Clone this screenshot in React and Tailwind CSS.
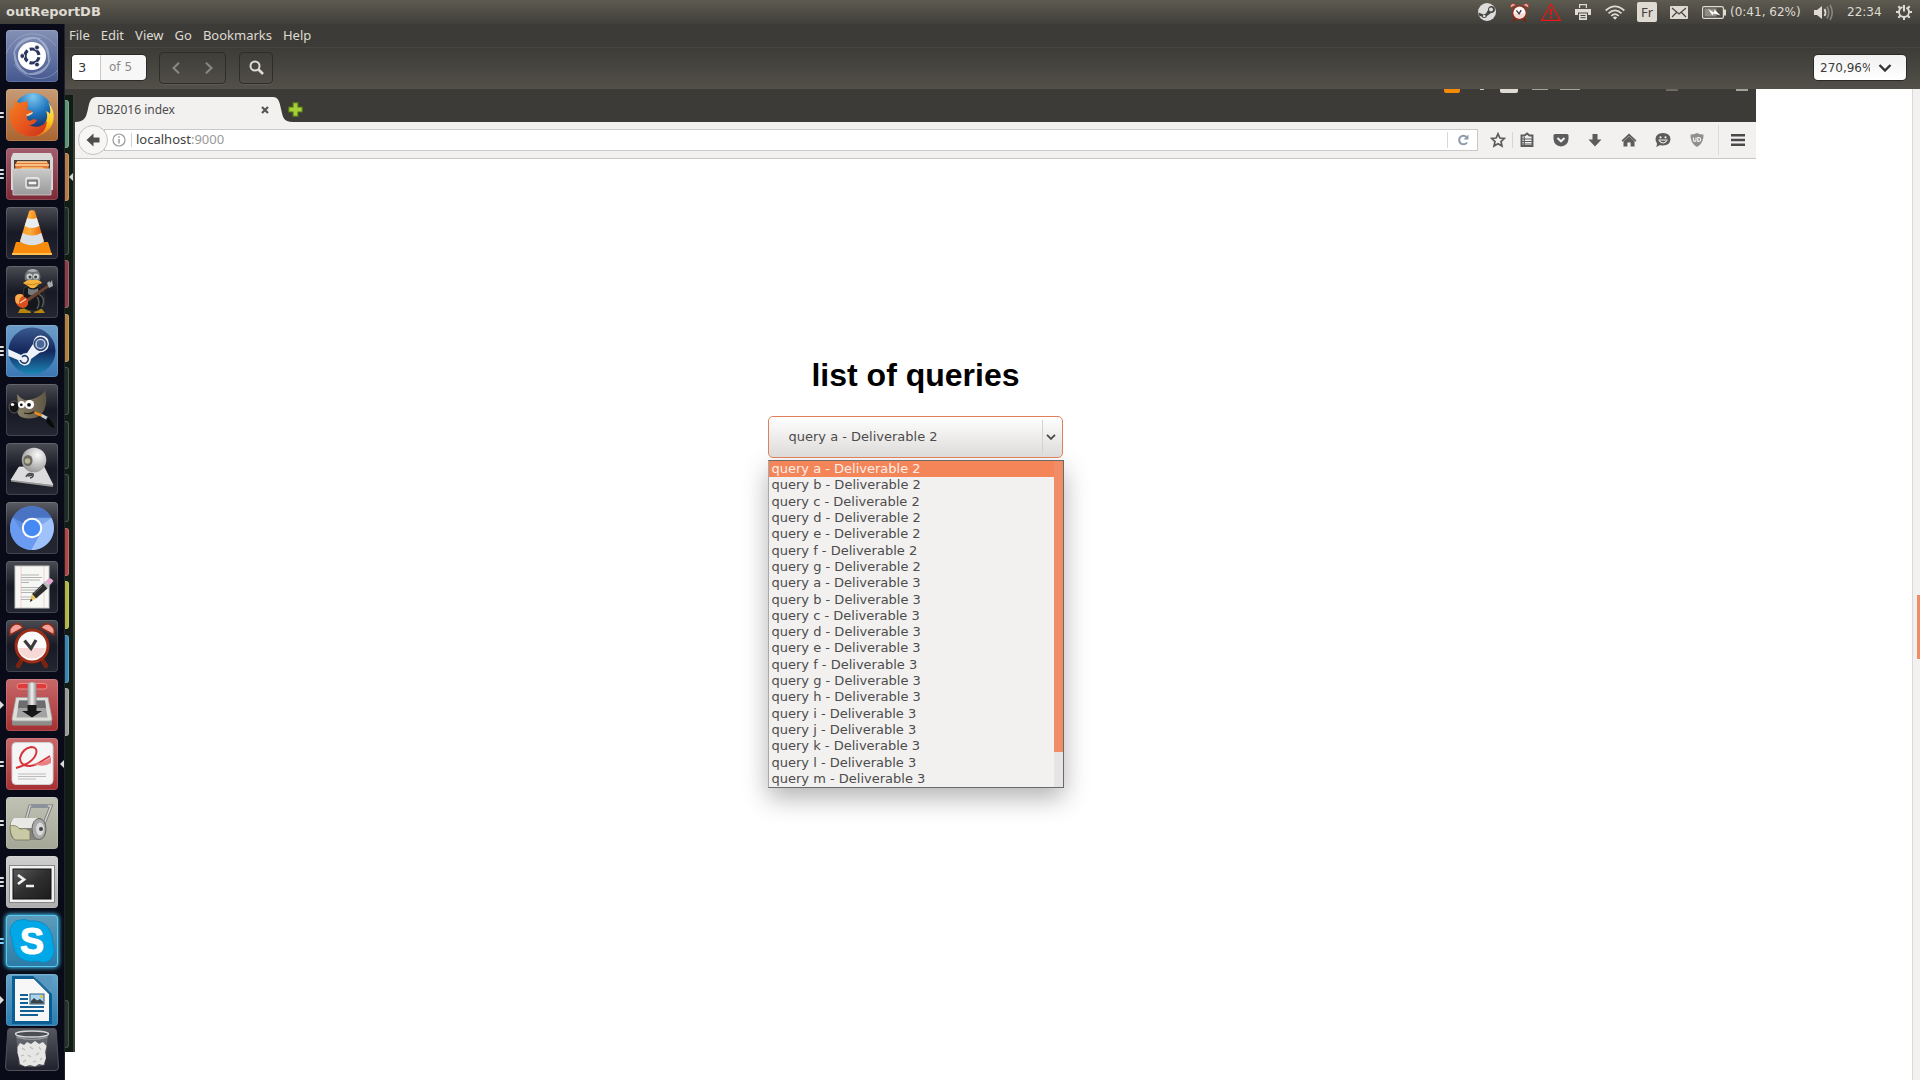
import React from "react";

const UI = "font-['Noto_Sans',sans-serif]";
const WIDE = "font-['DejaVu_Sans',sans-serif]";

/* ---------- launcher artwork (52 x 52 tiles) ---------- */

const Svg = ({ children }) => (
  <svg viewBox="0 0 52 52" className="block size-full" aria-hidden="true">{children}</svg>
);

const Dash = () => (
  <Svg>
    <path d="M26 7 C40 8 47 22 42 34 C43 20 36 10 26 7Z M45 26 C44 41 32 49 17 43 C32 45 41 38 45 26Z M26 45 C12 44 5 32 9 18 C9 32 15 41 26 45Z M7 26 C8 11 21 3 36 9 C21 7 11 14 7 26Z" fill="#c5cde8" opacity=".55" />
    <path d="M0 24 C8 2 34 -4 50 16 M52 40 C40 54 18 50 8 34" fill="none" stroke="#b9c3e2" strokeWidth="1" opacity=".4" />
    <circle cx="26" cy="26" r="14" fill="#fff" />
    <circle cx="26" cy="26" r="7" fill="none" stroke="#2a3660" strokeWidth="3.2" strokeDasharray="12.2 2.46" strokeDashoffset="-1.2" />
    <circle cx="16.3" cy="26" r="2.4" fill="#2a3660" stroke="#fff" strokeWidth=".8" />
    <circle cx="31" cy="17.5" r="2.4" fill="#2a3660" stroke="#fff" strokeWidth=".8" />
    <circle cx="31" cy="34.6" r="2.4" fill="#2a3660" stroke="#fff" strokeWidth=".8" />
  </Svg>
);

const Firefox = () => (
  <Svg>
    <defs>
      <radialGradient id="ffGlobe" cx=".5" cy=".1" r=".9"><stop offset="0" stopColor="#7cc8f0" /><stop offset=".5" stopColor="#1e74bd" /><stop offset="1" stopColor="#10265e" /></radialGradient>
      <linearGradient id="ffFox" x1="0" y1="0" x2="1" y2="1"><stop offset="0" stopColor="#f58220" /><stop offset=".6" stopColor="#e5501d" /><stop offset="1" stopColor="#c4331a" /></linearGradient>
      <linearGradient id="ffTail" x1="0" y1="0" x2="0" y2="1"><stop offset="0" stopColor="#ffee7a" /><stop offset=".6" stopColor="#ffc61a" /><stop offset="1" stopColor="#ee6b1c" /></linearGradient>
    </defs>
    <circle cx="27" cy="23" r="19" fill="url(#ffGlobe)" />
    <path d="M42 13 C50 22 50 36 40 43 C32 49 22 48 16 45 L36 38 C42 32 42 26 40 22 Q43 23 44 25 Q45 18 42 13Z" fill="url(#ffTail)" />
    <path d="M9 11 Q11 14 14 14 Q18 12 21 13 L21 9 Q22 12 22 16 L21 21 Q25 21 27 23 Q26 26 21 27 Q20 31 24 32 Q27 29 31 31 Q29 36 23 36 Q33 41 41 32 Q40 46 26 47.500 C12 47 3 38 4 26 Q4 20 8 17Z" fill="url(#ffFox)" />
    <path d="M20 26 Q23 24 27 23 Q26 26 21 27Z" fill="#f8d9b0" />
  </Svg>
);

const Files = () => (
  <Svg>
    <defs><linearGradient id="fileFront" x1="0" y1="0" x2="0" y2="1"><stop offset="0" stopColor="#c9c9c9" /><stop offset="1" stopColor="#999" /></linearGradient></defs>
    <path d="M7 5 H45 L47 10 V42 H5 V10Z" fill="#d9d9d9" />
    <path d="M8 12 H44 V42 H8Z" fill="#4a3b35" />
    <path d="M10 14 H42 L43 22 H9Z" fill="#e07a35" />
    <path d="M9 17 H43 M11 14 H41" stroke="#ffd9a0" strokeWidth="1.300" />
    <path d="M13 22 L16 19 H36 L41 22Z" fill="#f4b26a" />
    <path d="M6 21 H46 L45 47 H7Z" fill="url(#fileFront)" stroke="#ddd" strokeWidth=".7" />
    <rect x="20" y="30" width="13" height="10" rx="2" fill="#aaa" stroke="#f1f1f1" strokeWidth="1.300" />
    <rect x="22" y="33" width="9" height="4" fill="#f4f4f4" stroke="#555" />
  </Svg>
);

const Vlc = () => (
  <Svg>
    <defs><linearGradient id="vlcO" x1="0" x2="1"><stop offset="0" stopColor="#ff9c1a" /><stop offset=".4" stopColor="#ffad3d" /><stop offset="1" stopColor="#e06000" /></linearGradient></defs>
    <path d="M10 35 H42 L46 48 H6Z" fill="#f98c0c" />
    <path d="M6 46 H46 V48 H6Z" fill="#ffc04d" />
    <path d="M26 3 Q28.500 3 29 4.500 L38 34 Q26 41 14 34 L23 4.500 Q23.500 3 26 3Z" fill="url(#vlcO)" />
    <path d="M21.200 11 Q26 13 30.800 11 L33.400 19 Q26 23 18.600 19Z" fill="#e9eef2" />
    <path d="M16.700 26 Q26 31 35.300 26 L38 34.500 Q26 42 14 34.500Z" fill="#d9e0e6" />
  </Svg>
);

const Duck = () => (
  <Svg>
    <path d="M14 43 L23 42 L25 47 H12Z M29 43 L36 43 L39 47 H28Z" fill="#b8860b" />
    <path d="M18 22 Q27 17 35 22 Q40 30 38 39 Q33 46 27 45 Q18 45 16 38Z" fill="#15171a" stroke="#3a3d40" strokeWidth=".8" />
    <path d="M22 22 Q27 25 32 22 L33 28 Q27 31 22 28Z" fill="#75797b" />
    <path d="M33 28 Q40 32 36 41 M31 31 Q35 36 31 43" fill="none" stroke="#54585b" strokeWidth="1.500" />
    <path d="M19 14 Q17 4 27 3 Q36 4 34 14 Q27 18 19 14Z" fill="#6f7476" />
    <path d="M21 5 Q27 1 32 5 Q27 7 21 5Z" fill="#a9adaf" />
    <ellipse cx="23.500" cy="10.500" rx="3" ry="3" fill="#c9cdce" />
    <ellipse cx="30" cy="10.500" rx="3" ry="3" fill="#c9cdce" />
    <circle cx="24" cy="11" r="1.500" fill="#3d4143" /><circle cx="29.600" cy="11" r="1.500" fill="#3d4143" />
    <path d="M17 17 Q22 13 27 14 Q33 13 36 17 Q32 18 30 21 Q26 24 22 20Z" fill="#f5b53c" />
    <path d="M19 18 Q27 20 34 17" fill="none" stroke="#c77f17" strokeWidth=".9" />
    <path d="M20 33 L43 18 L44.500 20 L22 36Z" fill="#6b4531" />
    <path d="M41 17 L43.500 15 L44 17 L46 14 L47 20 L43 22Z" fill="#a9adb0" />
    <path d="M9 34 Q8 28 14 28 Q18 28 18 31 Q21 31 22 35 Q23 41 17 42 Q10 41 9 34Z" fill="#d9501d" />
    <path d="M9.500 35 Q8 28 14 28 Q17 28 17 30 Q13 31 13 38 Q10 38 9.500 35Z" fill="#f9ac4f" />
    <path d="M14 37 L20 33" stroke="#f2d6ba" strokeWidth="1.200" />
  </Svg>
);

const Steam = () => (
  <Svg>
    <defs><linearGradient id="steamG" x1="0" y1="0" x2="0" y2="1"><stop offset="0" stopColor="#3a5a8f" /><stop offset=".5" stopColor="#14275c" /><stop offset="1" stopColor="#1b87b8" /></linearGradient></defs>
    <circle cx="26" cy="26" r="23.500" fill="url(#steamG)" />
    <path d="M2 24 L15 30 Q17 28 21 28 L27 19 Q28 10 35 10.500 Q43 11 43 19 Q42 27 34 27.500 L25 34 Q24 41 18 40.500 Q13 39 12 35 L2.500 31Z" fill="#eef2f8" />
    <circle cx="34.500" cy="19" r="6.500" fill="#4a6696" stroke="#17305f" strokeWidth="1" />
    <circle cx="34.500" cy="19" r="4.500" fill="none" stroke="#dfe6f0" strokeWidth="1.200" />
    <path d="M14 35 Q16 39 20 38 Q24 35 21 31.500 Q18 29.500 16 32" fill="none" stroke="#1c3768" strokeWidth="1.500" />
  </Svg>
);

const Gimp = () => (
  <Svg>
    <defs><linearGradient id="gimpG" x1="0" x2="1"><stop offset="0" stopColor="#8b8168" /><stop offset="1" stopColor="#5d5644" /></linearGradient></defs>
    <path d="M11 10 Q15 15 19 16 Q28 16 35 11 Q38 9 39 6 Q43 22 35 31 Q26 37 15 33 Q9 30 12 20Z" fill="url(#gimpG)" />
    <ellipse cx="8" cy="23" rx="5" ry="6" fill="#141414" stroke="#5a5a5a" />
    <ellipse cx="6.500" cy="20.500" rx="1.800" ry="1.600" fill="#f2f2f2" />
    <circle cx="15.500" cy="20.500" r="3.500" fill="#fff" /><circle cx="15.300" cy="20.800" r="1.400" fill="#111" />
    <circle cx="23.500" cy="20.500" r="4.600" fill="#fff" /><circle cx="23" cy="20.800" r="1.900" fill="#111" />
    <path d="M18 29 Q25 31 29 27" fill="none" stroke="#262217" strokeWidth="1.300" />
    <path d="M28 27 L38 31 L37 33.500 L29 30Z" fill="#ef8b1c" />
    <path d="M36 30 L42 33 L41 36 L35.500 33Z" fill="#c8d0d6" />
    <path d="M41 33 Q46 36 49 44 Q43 43 40 37Z" fill="#0a0a0a" />
  </Svg>
);

const Webcam = () => (
  <Svg>
    <defs><radialGradient id="camG" cx=".65" cy=".3" r=".8"><stop offset="0" stopColor="#fafafa" /><stop offset="1" stopColor="#8d8d8d" /></radialGradient></defs>
    <path d="M13 24 L5 37 L47 42 L38 24Z" fill="#dcdcdf" stroke="#f5f5f5" strokeWidth=".7" />
    <path d="M5 37 L47 42 V44 L5 38.500Z" fill="#999" />
    <circle cx="28" cy="17" r="12.300" fill="url(#camG)" />
    <ellipse cx="22" cy="17.500" rx="4.500" ry="5.500" fill="#6c6960" />
    <circle cx="21.500" cy="18" r="2.800" fill="#b9b39a" />
    <path d="M20 34 Q22 29 27 31 Q28 34 24 35 M22 33 L26 32" fill="none" stroke="#444" strokeWidth="1.500" />
  </Svg>
);

const Chromium = () => (
  <Svg>
    <circle cx="26" cy="26" r="22" fill="#5c8ce0" />
    <path d="M26 26 L6.800 15.500 A22 22 0 0 1 45.200 15.500 L30 15.500Z" fill="#4a73c4" />
    <path d="M26 16 H45.500 A22 22 0 0 1 25 48 L34.500 31Z" fill="#a0c2fa" />
    <path d="M6.800 15.500 A22 22 0 0 0 25 48 L34 32 L18 32Z" fill="#6a9bf0" />
    <path d="M26 16 H45.500 L34 24Z" fill="#7ea7ea" />
    <circle cx="26" cy="26" r="10.200" fill="#fff" />
    <circle cx="26" cy="26" r="8.200" fill="#4489f4" />
  </Svg>
);

const Editor = () => (
  <Svg>
    <rect x="9" y="5" width="34" height="42" fill="#f7f7f5" stroke="#c7c7c3" />
    <path d="M15 5 V47 M38 5 V47" stroke="#f3b8b8" strokeWidth=".6" />
    <path d="M15 14 H33 M15 16.500 H36 M15 19 H34 M15 21.500 H23 M15 26.500 H36 M15 29 H33 M15 31.500 H34 M15 36 H32 M15 38.500 H27" stroke="#aaa" strokeWidth=".9" />
    <path d="M42 18 Q45 16 47.500 20 L44 24 L39.500 20.500Z" fill="#e9a6d0" />
    <path d="M39 20 L44 25 L41 27.500 L36.500 23Z" fill="#b9bdc0" />
    <path d="M37 22.500 L41.500 27.500 L30 37.500 L26 33Z" fill="#2c2c2c" />
    <path d="M36 25 L28 32.500" stroke="#777" strokeWidth="1" />
    <path d="M26 33 L30 37.500 L24 40.500Z" fill="#e9c35b" />
    <path d="M25 37.500 L26.500 39.500 L23.800 41Z" fill="#222" />
  </Svg>
);

const ClockArt = () => (
  <>
    <path d="M15 41 L12 46 M37 41 L40 46" stroke="#7a2410" strokeWidth="4.500" strokeLinecap="round" />
    <path d="M4 15 Q2 7 9 4 Q15 3 17 8Z M48 15 Q50 7 43 4 Q37 3 35 8Z" fill="#f2a09a" stroke="#8a2a16" strokeWidth="1.600" />
    <circle cx="26" cy="26" r="17.500" fill="#9b2c15" />
    <circle cx="26" cy="26" r="14.500" fill="#fbfbfb" />
    <path d="M12 28 A14.500 14.500 0 0 0 40 28Z" fill="#f6d9d6" />
    <path d="M18.500 20.500 L25 28.500 L30 20" fill="none" stroke="#3c3c3c" strokeWidth="3.200" />
  </>
);
const Alarm = () => <Svg><ClockArt /></Svg>;

const Transmission = () => (
  <Svg>
    <defs><linearGradient id="trH" x1="0" x2="1"><stop offset="0" stopColor="#8f8f8f" /><stop offset=".5" stopColor="#f1f1f1" /><stop offset="1" stopColor="#8b8b8b" /></linearGradient></defs>
    <path d="M10 19 H42 L46 39 V45 Q46 46.500 44 46.500 H8 Q6 46.500 6 45 V39Z" fill="#8d8d8a" />
    <path d="M10 18.500 H42 L46 40 Q46 42 44 42 H8 Q6 42 6 40Z" fill="#dededb" stroke="#a5a5a2" strokeWidth=".8" />
    <path d="M13 21.500 H39 L41.500 38.500 H10.500Z" fill="#a3a3a3" />
    <path d="M13 21.500 H39 L40 29 H12Z" fill="#6d6d70" />
    <rect x="11" y="4.500" width="30" height="5.500" rx="2.700" fill="#e03b3b" stroke="#f89a9a" strokeWidth=".8" />
    <rect x="21.500" y="3.500" width="9" height="26" rx="2" fill="url(#trH)" />
    <path d="M21.500 26 H30.500 V32 H36 L26 38.500 L16 32 H21.500Z" fill="#161616" />
  </Svg>
);

const Evince = () => (
  <Svg>
    <rect x="6" y="4.500" width="41" height="42" rx="4" fill="#f5f5f5" stroke="#cfcfcf" />
    <path d="M12 36 H40 M12 38.500 H40 M12 41 H30" stroke="#bbb" strokeWidth="1" />
    <path d="M10 30 Q27 25 30 16 Q32 9 25 9 Q16 11 14 20 Q14 28 24 28 Q31 27 36 23 L44 18" fill="none" stroke="#d6343a" strokeWidth="2" />
    <path d="M27 26 Q37 25 45 19 L45 25 Q38 30 27 26Z" fill="#e98083" />
  </Svg>
);

const Roller = () => (
  <Svg>
    <path d="M20 23 L24 9 H45 L36 32" fill="none" stroke="#777" strokeWidth="3.200" />
    <path d="M20 23 L24 9 H45 L36 32" fill="none" stroke="#d4d4d4" strokeWidth="1.500" />
    <rect x="25" y="7" width="17" height="4" rx="2" fill="#8b929c" />
    <path d="M8 21 H34 Q41 24 40 33 Q40 42 33 43 H9 Q3 40 4 31 Q4 23 8 21Z" fill="#84847e" />
    <path d="M8 21 H32 L30 31 H5 Q4 24 8 21Z" fill="#e8e8e4" />
    <path d="M4 29 Q9 27 14 32 Q20 30 24 34 V43 H9 Q4 39 4 29Z" fill="#c9c9a6" stroke="#75755a" strokeWidth=".8" />
    <ellipse cx="33" cy="32" rx="7" ry="10.500" fill="#a9a9a9" stroke="#666" />
    <ellipse cx="34" cy="32" rx="4" ry="6.500" fill="#d9d9d9" />
    <circle cx="35" cy="32" r="2" fill="#444" />
  </Svg>
);

const Terminal = () => (
  <Svg>
    <defs><linearGradient id="termG" x1="0" y1="0" x2="1" y2="1"><stop offset="0" stopColor="#5a5a5a" /><stop offset=".5" stopColor="#2f2f2f" /><stop offset="1" stopColor="#1c1c1c" /></linearGradient></defs>
    <rect x="3.500" y="9.500" width="45" height="37" fill="#f1f1f1" stroke="#888" />
    <rect x="7" y="13" width="38" height="30" fill="url(#termG)" stroke="#111" />
    <path d="M12 19 L18 23.500 L12 28" fill="none" stroke="#f0f0f0" strokeWidth="2.800" />
    <path d="M20 30 H28" stroke="#f0f0f0" strokeWidth="2.400" />
  </Svg>
);

const Skype = () => (
  <Svg>
    <path d="M14 5 Q19 3 23 6 Q46 4 47 29 Q50 36 46 43 Q40 50 32 46 Q8 50 6 24 Q2 17 6 10 Q9 5 14 5Z" fill="#00a8e8" stroke="#0b86be" strokeWidth=".8" />
    <text x="26" y="38.500" textAnchor="middle" fontFamily="Liberation Sans" fontWeight="bold" fontSize="36" fill="#fff" stroke="#fff" strokeWidth="1.200" strokeLinejoin="round">S</text>
  </Svg>
);

const Writer = () => (
  <Svg>
    <path d="M6 2 H46 V50 H6Z" fill="#0c5d92" />
    <path d="M27 2 H46 V20Z" fill="#6ba6cc" opacity=".8" />
    <path d="M9 5 H28 L43 20 V47 H9Z" fill="#f7f7f7" />
    <path d="M28 5 L43 20 V17 L31 5Z" fill="#1d699b" />
    <path d="M14 21 H22 M14 25 H22 M14 29 H22 M14 33 H38 M14 37 H38 M14 41 H32" stroke="#145f94" strokeWidth="2" />
    <rect x="24" y="20" width="14" height="10" fill="#a8d4ee" stroke="#2b5e80" />
    <path d="M25 29.500 V27 L28 24 L31 26.500 L34 25 L37.500 28 V29.500Z" fill="#394247" />
    <circle cx="35.500" cy="22.500" r="1.500" fill="#eec23a" />
  </Svg>
);

const Trash = () => (
  <svg viewBox="0 0 54 43" className="block w-full" aria-hidden="true">
    <defs><linearGradient id="trashG" x1="0" y1="0" x2="0" y2="1"><stop offset="0" stopColor="#55565e" /><stop offset="1" stopColor="#20212c" /></linearGradient></defs>
    <path d="M5 .5 H49 Q51 .5 51.300 3 L53.500 39 Q53.500 42.500 50 42.500 H4 Q.5 42.500 .5 39 L2.700 3 Q3 .5 5 .5Z" fill="url(#trashG)" stroke="#50515b" />
    <path d="M11 7 L14 37 Q27 41 40 37 L43 7Z" fill="#777981" opacity=".6" />
    <path d="M12.500 19 L15 15 L19 17 L22 14 L26 16 L30 13 L34 16 L38 14 L41.500 18 L40 24 L41 30 L38.500 37 L34 36 L30 38.500 L25 37 L20 38.500 L15 36 L14 30 L12.500 25Z" fill="#e6e7e5" />
    <path d="M17 20 L20 22 M25 19 L28 21 M34 19 L36 22 M16 28 L19 27 M23 27 L26 29 M31 27 L34 25 M18 34 L21 32 M28 34 L31 33 M35 32 L37 30" fill="none" stroke="#b9bbb8" strokeWidth="1.200" />
    <ellipse cx="27" cy="6" rx="16.500" ry="3" fill="#4c4e56" stroke="#d5d6d6" strokeWidth="1.300" />
    <path d="M11.500 9 Q27 14 42.500 9" fill="none" stroke="#9a9ca0" strokeWidth="1.200" />
  </svg>
);

const launcher = [
  { name: "Search your computer", art: Dash, bg: "bg-linear-to-b from-[#8490b5] to-[#45588f]" },
  { name: "Firefox", art: Firefox, bg: "bg-linear-to-b from-[#c79b76] to-[#a9642f]", pips: 2 },
  { name: "Files", art: Files, bg: "bg-linear-to-b from-[#a25d6d] to-[#7c2936]", pips: 3 },
  { name: "VLC", art: Vlc, bg: "bg-linear-to-b from-[#4b4c53] via-[#171924] to-[#242631]" },
  { name: "Media tools", art: Duck, bg: "bg-linear-to-b from-[#4b4c53] via-[#171924] to-[#242631]" },
  { name: "Steam", art: Steam, bg: "bg-linear-to-b from-[#6d9cc8] to-[#3a78b4]", pips: 3 },
  { name: "GIMP", art: Gimp, bg: "bg-linear-to-b from-[#4b4c53] via-[#171924] to-[#242631]" },
  { name: "Webcam", art: Webcam, bg: "bg-linear-to-b from-[#4b4c53] via-[#171924] to-[#242631]" },
  { name: "Chromium", art: Chromium, bg: "bg-linear-to-b from-[#5b5c63] via-[#202230] to-[#242631]" },
  { name: "Text Editor", art: Editor, bg: "bg-linear-to-b from-[#4b4c53] via-[#171924] to-[#242631]" },
  { name: "Alarm", art: Alarm, bg: "bg-linear-to-b from-[#4b4c53] via-[#171924] to-[#242631]" },
  { name: "Transmission", art: Transmission, bg: "bg-linear-to-b from-[#c8686a] to-[#a52f33]", arrow: true },
  { name: "Document Viewer", art: Evince, bg: "bg-linear-to-b from-[#c8686a] to-[#a52f33]", pips: 2, active: true },
  { name: "Paint Roller", art: Roller, bg: "bg-linear-to-b from-[#c0c2b5] to-[#a5a796]", pips: 2 },
  { name: "Terminal", art: Terminal, bg: "bg-linear-to-b from-[#cfcfcf] to-[#adadad]", pips: 3 },
  { name: "Skype", art: Skype, bg: "bg-linear-to-b from-[#5f9cbb] to-[#2a7ba6]", pips: 2, urgent: true },
  { name: "Writer", art: Writer, bg: "bg-linear-to-b from-[#63a3c9] to-[#2a7db0]", arrow: true },
];

function LauncherItem({ item }) {
  const Art = item.art;
  return (
    <li className="relative flex h-[52px] w-full shrink-0 items-center pl-1.5">
      {item.pips && (
        <span className="absolute left-0 flex flex-col gap-0.5">
          {Array.from({ length: item.pips }, (_, i) => (
            <span key={i} className={item.urgent ? "h-0.5 w-1 rounded-r-full bg-[#7fd0f2]" : "h-0.5 w-1 rounded-r-full bg-[#dcdcdc]"} />
          ))}
        </span>
      )}
      {item.arrow && <span className="absolute left-0 border-y-4 border-l-4 border-y-transparent border-l-[#dcdcdc]" />}
      <button
        type="button"
        aria-label={item.name}
        className={`size-[52px] overflow-hidden rounded-[4px] ${item.bg} ${item.urgent ? "shadow-[0_0_4px_1px_#45c4f5] ring-1 ring-[#57c8f2] ring-inset" : "shadow-[inset_0_0_0_1px_rgba(255,255,255,0.14)]"}`}
      >
        <Art />
      </button>
      {item.active && <span className="absolute right-0 border-y-4 border-r-4 border-y-transparent border-r-[#dcdcdc]" />}
    </li>
  );
}

function Launcher() {
  return (
    <nav aria-label="Launcher" className="flex w-[65px] shrink-0 flex-col border-r border-[#20222c] bg-[#090c18] pt-1.5">
      <ul className="flex flex-col gap-[7px]">
        {launcher.map((item) => <LauncherItem key={item.name} item={item} />)}
      </ul>
      <button type="button" aria-label="Trash" className="mt-0.5 ml-[5px] w-[54px]"><Trash /></button>
    </nav>
  );
}

/* ---------- top panel ---------- */

const Cell = ({ label, children }) => (
  <button type="button" aria-label={label} className="flex w-8 items-center justify-center">{children}</button>
);

function TopPanel() {
  return (
    <header className={`flex h-6 shrink-0 items-center justify-between bg-linear-to-b from-[#5e5b50] to-[#403f3a] pr-2 pl-1.5 text-[#dfdbd2] ${WIDE}`}>
      <h1 className="text-[13px] leading-6 font-bold">outReportDB</h1>
      <div className="flex h-6 items-center">
        <Cell label="Steam">
          <svg viewBox="0 0 18 18" className="size-[18px]"><circle cx="9" cy="9" r="9" fill="#dcdcdc" /><path d="M.5 9.500 L5.500 11.500 L8 10.500 L10 7 A3.500 3.500 0 1 1 13 10 L9 13 A3 3 0 0 1 3.500 13.500 L1 12.500Z" fill="#47453f" /><circle cx="13" cy="6.500" r="2" fill="#dcdcdc" /><circle cx="6.200" cy="13" r="1.300" fill="#dcdcdc" /></svg>
        </Cell>
        <Cell label="Alarm"><svg viewBox="1 2 50 47" className="size-[21px]"><ClockArt /></svg></Cell>
        <Cell label="Warning">
          <svg viewBox="0 0 20 18" className="h-[18px] w-5" fill="none" stroke="#f01414"><path d="M10 1 L19.300 17.300 H.7Z" strokeWidth="1.200" /><path d="M10 6 V12 M10 13.500 V15.500" strokeWidth="1.800" /></svg>
        </Cell>
        <Cell label="Printer">
          <svg viewBox="0 0 16 16" className="size-4" fill="#dfdbd2"><path d="M4 0 H12 V4 H10.800 V1.300 H5.200 V4 H4Z M0 5 H16 V11 H13 V8.500 H3 V11 H0Z M4 9.500 H12 V16 H4Z" /><path d="M5.500 11.500 H10.500 M5.500 13.700 H10.500" stroke="#47453f" /></svg>
        </Cell>
        <Cell label="Network">
          <svg viewBox="0 0 20 15" className="h-[15px] w-5" fill="none" stroke="#dfdbd2" strokeWidth="1.700"><path d="M.7 5.500 Q10 -2.800 19.300 5.500 M3.500 8.300 Q10 2.300 16.500 8.300 M6.200 11 Q10 7.300 13.800 11" /><path d="M7.800 12.500 Q10 10.500 12.200 12.500 L10 14.800Z" fill="#dfdbd2" stroke="none" /></svg>
        </Cell>
        <Cell label="Keyboard layout">
          <span className={`h-5 w-5 rounded-[2px] bg-[#dfdbd2] text-center text-[13px] leading-5 text-[#403f3a] ${UI}`}>Fr</span>
        </Cell>
        <Cell label="Messages">
          <svg viewBox="0 0 18 13" className="h-[13px] w-[18px]"><rect width="18" height="13" rx="1" fill="#dfdbd2" /><path d="M2 2 L9 8 L16 2 M2 11 L6.500 6.500 M16 11 L11.500 6.500" fill="none" stroke="#47453f" strokeWidth="1.200" /></svg>
        </Cell>
        <button type="button" className="ml-[7px] flex w-28 items-center gap-1 text-[12px]">
          <svg viewBox="0 0 24 13" className="h-[13px] w-6 shrink-0"><rect x=".6" y=".6" width="20.800" height="11.800" rx="1.500" fill="none" stroke="#dfdbd2" strokeWidth="1.200" /><rect x="22" y="3.500" width="2" height="6" fill="#dfdbd2" /><rect x="2.500" y="2.500" width="12" height="8" fill="#8f8c83" /><path d="M6 3 L12 6.500 L12.500 3.500 L18.500 9.500 L11.500 7.500 L10.500 9.500Z" fill="#fff" /></svg>
          (0:41, 62%)
        </button>
        <button type="button" aria-label="Volume" className="w-[33px]">
          <svg viewBox="0 0 20 17" className="h-[17px] w-5" fill="none"><path d="M0 6 H3 L8 2 V15 L3 11 H0Z" fill="#dfdbd2" /><path d="M10.500 5 Q12.500 8.500 10.500 12" stroke="#dfdbd2" strokeWidth="1.800" /><path d="M13 2.500 Q16.500 8.500 13 14.500 M16 1 Q20.500 8.500 16 16" stroke="#8a877d" strokeWidth="1.600" /></svg>
        </button>
        <button type="button" className="w-[49px] text-left text-[12px]">22:34</button>
        <button type="button" aria-label="Session">
          <svg viewBox="0 0 16 16" className="size-4" fill="none" stroke="#dfdbd2"><circle cx="8" cy="8" r="5" strokeWidth="1.800" strokeDasharray="27.400 4" strokeDashoffset="-25.500" /><path d="M8 1 V7.500" strokeWidth="2" /><path d="M13 8 H16 M0 8 H3 M8 13 V16 M11.500 11.500 L13.700 13.700 M4.500 11.500 L2.300 13.700 M4.500 4.500 L2.300 2.300 M11.500 4.500 L13.700 2.300" strokeWidth="2" /></svg>
        </button>
      </div>
    </header>
  );
}

/* ---------- document viewer chrome ---------- */

function ViewerBars() {
  return (
    <>
      <nav aria-label="Menu" className={`flex h-[23px] shrink-0 items-center gap-[11px] bg-[#3c3b37] pl-1 text-[13px] text-[#dfdbd2] ${UI}`}>
        {["File", "Edit", "View", "Go", "Bookmarks", "Help"].map((m) => <button key={m} type="button">{m}</button>)}
      </nav>
      <div className={`flex h-[42px] shrink-0 items-center border-t border-[#464540] bg-linear-to-b from-[#3d3c38] to-[#525048] pr-3.5 pb-0.5 pl-[7px] text-[13px] ${WIDE}`}>
        <div className="flex h-[25px] w-[74px] overflow-hidden rounded-[4px] bg-[#f7f7f7] ring-1 ring-[#2b2a27]">
          <input aria-label="Page" defaultValue="3" className="w-[29px] border-r border-[#cfc9c4] bg-white pl-1.5 text-[#3c3c3c] outline-none" />
          <span className="pl-2 text-[12px] leading-[25px] text-[#8a8a8a]">of 5</span>
        </div>
        <div className="ml-[13px] flex h-8 w-[67px] rounded-[4px] border border-[#2e2d2a] text-[#8c8982] shadow-[0_1px_0_#5b5950]">
          <button type="button" aria-label="Previous page" className="flex flex-1 items-center justify-center">
            <svg viewBox="0 0 8 12" className="h-3 w-2" fill="none" stroke="currentColor" strokeWidth="2"><path d="M7 .7 L1.500 6 L7 11.300" /></svg>
          </button>
          <button type="button" aria-label="Next page" className="flex flex-1 items-center justify-center">
            <svg viewBox="0 0 8 12" className="h-3 w-2" fill="none" stroke="currentColor" strokeWidth="2"><path d="M1 .7 L6.500 6 L1 11.300" /></svg>
          </button>
        </div>
        <button type="button" aria-label="Find" className="ml-[13px] flex h-8 w-[34px] items-center justify-center rounded-[4px] border border-[#2e2d2a] shadow-[0_1px_0_#5b5950]">
          <svg viewBox="0 0 15 15" className="size-[15px]" fill="none" stroke="#dfdbd2"><circle cx="6" cy="6" r="4.500" strokeWidth="2" /><path d="M9.500 9.500 L14 14" strokeWidth="2.600" /></svg>
        </button>
        <div className="ml-auto flex h-[25px] w-[92px] items-center rounded-[4px] bg-linear-to-b from-[#f1f1f1] to-white pl-1.5 text-[#3c3c3c] ring-1 ring-[#2b2a27]">
          <input aria-label="Zoom" defaultValue="270,96%" className="w-[50px] bg-transparent text-[12px] outline-none" />
          <button type="button" aria-label="Zoom levels" className="ml-2">
            <svg viewBox="0 0 14 8" className="h-2 w-3.5" fill="none" stroke="#333" strokeWidth="2.400"><path d="M1.500 1 L7 6.500 L12.500 1" /></svg>
          </button>
        </div>
      </div>
    </>
  );
}

/* ---------- the document page: a browser window ---------- */

const stripTiles = [
  "bg-[#5b9375]", "bg-[#b57a48]", "bg-[#1e2d26]", "bg-[#8c3b49]", "bg-[#b48040]", "bg-[#1e2d26]",
  "bg-[#1e2d26]", "bg-[#1e2d26]", "bg-[#b14544]", "bg-[#b3b444]", "bg-[#3b85b4]", "bg-[#999c99]",
];

function Strip() {
  return (
    <div className="flex w-[10px] shrink-0 flex-col bg-[#3c3b37] pt-1.5">
      <div className="relative flex flex-1 flex-col border-r-2 border-[#3a413b] bg-[#111d14] pt-[5px] pb-1">
        <div className="flex h-[636px] flex-col justify-between">
          {stripTiles.map((c, i) => <span key={i} className={`h-12 w-1 rounded-r-[3px] border-y border-r border-white/20 ${c}`} />)}
        </div>
        <span className="mt-auto h-12 w-1 rounded-r-[3px] border border-l-0 border-white/15 bg-[#26322c]" />
        <span className="absolute top-[78px] right-0 border-y-4 border-r-4 border-y-transparent border-r-[#d8d8d8]" />
      </div>
    </div>
  );
}

const BarBtn = ({ label, children, className = "w-[34px]" }) => (
  <button type="button" aria-label={label} className={`flex shrink-0 items-center justify-center text-[#5c5c5c] ${className}`}>
    <svg viewBox="0 0 16 16" className="size-4" fill="currentColor">{children}</svg>
  </button>
);

function BrowserTabs() {
  return (
    <div className="relative flex h-[33px] items-end bg-[#3c3b37]">
      <svg viewBox="0 0 22 25" className="h-[25px] w-[22px] shrink-0"><path d="M0 25 C10 25 11 20 13 12 C14.500 4 16 0 22 0 V25Z" fill="#f2f1f0" /></svg>
      <div className={`flex h-[25px] w-[176px] items-center justify-between bg-[#f2f1f0] text-[12px] text-[#4c4c4c] ${UI}`}>
        <span>DB2016 index</span>
        <button type="button" aria-label="Close tab" className="mr-1">
          <svg viewBox="0 0 8 8" className="size-2" stroke="#555" strokeWidth="2.200"><path d="M1 1 L7 7 M7 1 L1 7" /></svg>
        </button>
      </div>
      <svg viewBox="0 0 20 25" className="h-[25px] w-5 shrink-0"><path d="M20 25 C10 25 10 20 8 12 C6.500 4 5 0 0 0 V25Z" fill="#f2f1f0" /></svg>
      <button type="button" aria-label="New tab" className="mb-[5px] -ml-[5px] size-[15px]">
        <svg viewBox="0 0 15 15" className="size-[15px]"><path d="M5 .7 H10 V5 H14.300 V10 H10 V14.300 H5 V10 H.7 V5 H5Z" fill="#a8cf3a" stroke="#4f7315" strokeWidth="1.200" /></svg>
      </button>
      <div className="absolute top-0 right-2 flex items-start">
        <span className="h-1 w-4 rounded-b-[2px] bg-[#f58a07]" />
        <span className="ml-5 h-px w-1 bg-[#cfcbc2]" />
        <span className="ml-4 h-1 w-[18px] rounded-b-[2px] bg-[#dfdbd2]" />
        <span className="ml-3.5 h-px w-4 bg-[#a5a299]" />
        <span className="ml-3 h-px w-5 bg-[#a5a299]" />
        <span className="ml-[86px] h-0.5 w-3 bg-[#6b6962]" />
        <span className="ml-[58px] h-0.5 w-3 bg-[#a5a299]" />
      </div>
    </div>
  );
}

function BrowserBar() {
  return (
    <div className="flex h-[37px] items-center border-b border-[#c9c7c5] bg-[#f2f1f0] pl-[3px]">
      <button type="button" aria-label="Back" className="z-10 flex size-[30px] shrink-0 items-center justify-center rounded-full border border-[#c4c2c0] bg-[#f7f6f5]">
        <svg viewBox="0 0 14 14" className="size-3.5" fill="#4d4d4d"><path d="M7.500 .5 V4.500 H13.500 V9.500 H7.500 V13.500 L.5 7Z" /></svg>
      </button>
      <div className={`-ml-1 flex h-[22px] flex-1 items-center border border-[#cccac8] bg-white pl-[7px] text-[13px] ${UI}`}>
        <svg viewBox="0 0 14 14" className="size-3.5 shrink-0" fill="none" stroke="#9a9a9a"><circle cx="7" cy="7" r="6" strokeWidth="1.200" /><path d="M7 6 V10.500 M7 3.300 V4.800" strokeWidth="1.500" /></svg>
        <span className="ml-[5px] h-3.5 w-px bg-[#cfcfcf]" />
        <a href="http://localhost:9000" className="ml-1 flex-1 text-[#3f3f3f]">localhost<span className="text-[#9a9a9a]">:9000</span></a>
        <button type="button" aria-label="Reload" className="flex h-4 w-[30px] items-center justify-center border-l border-[#d8d8d8]">
          <svg viewBox="0 0 12 12" className="size-3" fill="none" stroke="#8d9bab" strokeWidth="2"><path d="M9.500 3 A4.300 4.300 0 1 0 10 8.500" /><path d="M11.500 .5 V5.500 H6.500Z" fill="#8d9bab" stroke="none" /></svg>
        </button>
      </div>
      <BarBtn label="Bookmark" className="ml-[5px] w-[29px]"><path d="M8 1.800 L9.900 6 L14.300 6.500 L11 9.500 L12 14 L8 11.700 L4 14 L5 9.500 L1.700 6.500 L6.100 6Z" fill="none" stroke="currentColor" strokeWidth="1.700" /></BarBtn>
      <BarBtn label="Bookmarks" className="mr-1 h-4 w-7 border-l border-[#d8d6d4]"><path d="M2.500 3.500 H5.500 L8 1.500 L10.500 3.500 H13.500 V14 H2.500Z" fill="none" stroke="currentColor" strokeWidth="1.900" /><path d="M2 7 H14 M2 9.500 H14 M2 12 H14 M5.300 5 V13" stroke="currentColor" strokeWidth="1.200" /></BarBtn>
      <BarBtn label="Pocket"><path d="M2 2 H14 Q15.500 2 15.500 3.500 V7 Q15 14 8 14.500 Q1 14 .5 7 V3.500 Q.5 2 2 2Z" /><path d="M4.500 6 L8 9.300 L11.500 6" fill="none" stroke="#f2f1f0" strokeWidth="2" /></BarBtn>
      <BarBtn label="Downloads"><path d="M5.500 2 H10.500 V7.500 H14.500 L8 14.500 L1.500 7.500 H5.500Z" /></BarBtn>
      <BarBtn label="Home"><path d="M8 1.500 L15.500 8.500 L14.300 9.800 L8 4 L1.700 9.800 L.5 8.500Z" /><path d="M8 4.300 L13.500 9.300 V14.500 H9.600 V10.500 H6.400 V14.500 H2.500 V9.300Z" /></BarBtn>
      <BarBtn label="Chat"><path d="M8 1 Q15.500 1.500 15.500 7.300 Q15 13.500 8 13.500 Q6.500 13.500 5 13 Q3 14.800 1 14.800 Q2.300 13 2 11.500 Q.5 9.500 .5 7.300 Q.5 1.500 8 1Z" /><path d="M3.500 8 H12.500" stroke="#f2f1f0" strokeWidth="1" /><path d="M4 8.500 Q8 13.500 12 8.500" fill="none" stroke="#f2f1f0" strokeWidth="1.200" /><circle cx="5.500" cy="5.300" r="1.100" fill="#f2f1f0" /><circle cx="10.500" cy="5.300" r="1.100" fill="#f2f1f0" /></BarBtn>
      <BarBtn label="Ad blocker" className="mr-1 w-[34px]"><path d="M8 1 Q11 2.500 14.500 2.500 Q15 11 8 15 Q1 11 1.500 2.500 Q5 2.500 8 1Z" fill="#8f8f8f" /><path d="M4.500 5.500 V8 Q4.500 9.300 5.700 9.300 Q7 9.300 7 8 V5.500 M8.800 5.500 H9.800 Q11.700 5.700 11.700 7.400 Q11.700 9.200 9.800 9.300 H8.800Z" fill="none" stroke="#f2f1f0" strokeWidth="1.200" /></BarBtn>
      <BarBtn label="Menu" className="h-[30px] w-[38px] border-l border-[#dcdad8]"><path d="M1 2 H15 V4.500 H1Z M1 6.800 H15 V9.300 H1Z M1 11.600 H15 V14.100 H1Z" fill="#4a4a4a" /></BarBtn>
    </div>
  );
}

const queries = [
  ...[..."abcdefg"].map((q) => `query ${q} - Deliverable 2`),
  ...[..."abcdefghijklm"].map((q) => `query ${q} - Deliverable 3`),
];

function QueryPicker() {
  return (
    <main className="flex flex-col items-center pt-[197px]">
      <label htmlFor="query" className="font-['Liberation_Sans',sans-serif] text-[32px] leading-[38px] font-bold text-black">list of queries</label>
      <div className={`mt-[22px] w-[296px] text-[13px] text-[#4c4c4c] ${WIDE}`}>
        <div className="relative mr-px">
          <select id="query" className="block h-[42px] w-full appearance-none rounded-[5px] border border-[#e0805a] bg-linear-to-b from-white to-[#dddbd9] pl-5 outline-none">
            {queries.map((q) => <option key={q}>{q}</option>)}
          </select>
          <span className="pointer-events-none absolute inset-y-1 right-0 flex w-[21px] items-center justify-center border-l border-[#d5d3d1] pr-1">
            <svg viewBox="0 0 10 6" className="h-1.5 w-2.5" fill="none" stroke="#4c4c4c" strokeWidth="1.900"><path d="M1 .8 L5 4.800 L9 .8" /></svg>
          </span>
        </div>
        <div className="mt-0.5 flex border border-[#6a6a6a] border-l-[#a9a9a9] bg-[#f2f1f0] shadow-[0_10px_24px_rgba(0,0,0,0.3)]">
          <ul role="listbox" aria-label="Queries" className="grid h-[326px] flex-1 auto-rows-fr">
            {queries.map((q, i) => (
              <li key={q} role="option" aria-selected={i === 0} className={`flex items-center pl-[3px] leading-4 ${i === 0 ? "bg-[#f38559] text-[#fbeee8]" : ""}`}>{q}</li>
            ))}
          </ul>
          <div className="w-[9px] bg-[#e6e5e4]"><div className="h-[291px] bg-[#f08d66]" /></div>
        </div>
      </div>
    </main>
  );
}

export default function App() {
  return (
    <div className="flex h-screen flex-col overflow-hidden bg-white">
      <TopPanel />
      <div className="flex min-h-0 flex-1">
        <Launcher />
        <section className="flex min-w-0 flex-1 flex-col">
          <ViewerBars />
          <div className="flex min-h-0 flex-1">
            <div className="flex min-w-0 flex-1 bg-white pr-[156px] pb-7">
              <Strip />
              <div className="min-w-0 flex-1">
                <BrowserTabs />
                <BrowserBar />
                <QueryPicker />
              </div>
            </div>
            <div className="flex w-2 shrink-0 justify-end border-l border-[#d9d8d6] bg-[#f2f1f0] pt-[506px]">
              <div className="h-16 w-[3px] bg-[#f08d66]" />
            </div>
          </div>
        </section>
      </div>
    </div>
  );
}
